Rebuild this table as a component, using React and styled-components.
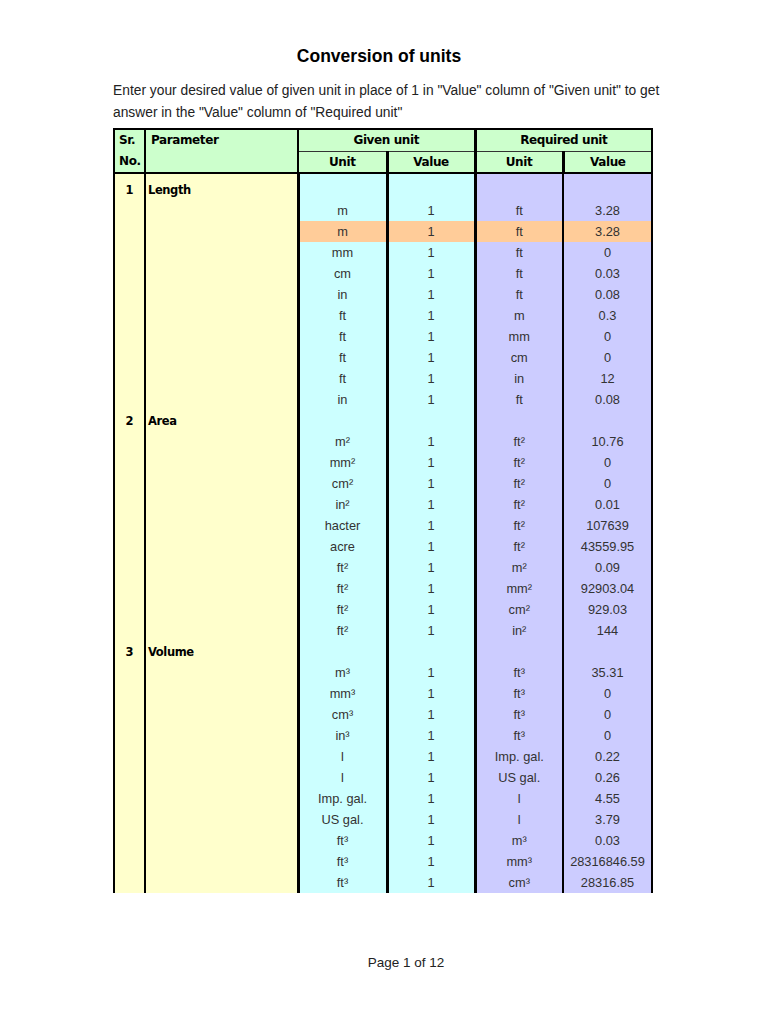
import styled, { createGlobalStyle } from "styled-components";

const GlobalStyle = createGlobalStyle`
  html, body {
    margin: 0;
    padding: 0;
    background: #fff;
  }
  body {
    font-family: "Liberation Sans", Arial, sans-serif;
  }
`;

const sections = [
  {
    no: 1,
    name: "Length",
    rows: [
      ["m", "1", "ft", "3.28"],
      ["m", "1", "ft", "3.28", true],
      ["mm", "1", "ft", "0"],
      ["cm", "1", "ft", "0.03"],
      ["in", "1", "ft", "0.08"],
      ["ft", "1", "m", "0.3"],
      ["ft", "1", "mm", "0"],
      ["ft", "1", "cm", "0"],
      ["ft", "1", "in", "12"],
      ["in", "1", "ft", "0.08"],
    ],
  },
  {
    no: 2,
    name: "Area",
    rows: [
      ["m²", "1", "ft²", "10.76"],
      ["mm²", "1", "ft²", "0"],
      ["cm²", "1", "ft²", "0"],
      ["in²", "1", "ft²", "0.01"],
      ["hacter", "1", "ft²", "107639"],
      ["acre", "1", "ft²", "43559.95"],
      ["ft²", "1", "m²", "0.09"],
      ["ft²", "1", "mm²", "92903.04"],
      ["ft²", "1", "cm²", "929.03"],
      ["ft²", "1", "in²", "144"],
    ],
  },
  {
    no: 3,
    name: "Volume",
    rows: [
      ["m³", "1", "ft³", "35.31"],
      ["mm³", "1", "ft³", "0"],
      ["cm³", "1", "ft³", "0"],
      ["in³", "1", "ft³", "0"],
      ["l", "1", "Imp. gal.", "0.22"],
      ["l", "1", "US gal.", "0.26"],
      ["Imp. gal.", "1", "l", "4.55"],
      ["US gal.", "1", "l", "3.79"],
      ["ft³", "1", "m³", "0.03"],
      ["ft³", "1", "mm³", "28316846.59"],
      ["ft³", "1", "cm³", "28316.85"],
    ],
  },
];

export default function App() {
  return (
    <Page>
      <GlobalStyle />
      <Title>Conversion of units</Title>
      <Intro>
        Enter your desired value of given unit in place of 1 in "Value" column of "Given unit" to get
        answer in the "Value" column of "Required unit"
      </Intro>

      <Sheet>
        <colgroup>
          <col style={{ width: 31 }} />
          <col style={{ width: 153 }} />
          <col style={{ width: 89 }} />
          <col style={{ width: 88 }} />
          <col style={{ width: 88 }} />
          <col style={{ width: 89 }} />
        </colgroup>
        <thead>
          <tr>
            <HeadCell rowSpan={2} $align='left' $pad='4px' $valign='top'>
              Sr.
              <br />
              No.
            </HeadCell>
            <HeadCell rowSpan={2} $align='left' $pad='5px' $valign='top'>
              Parameter
            </HeadCell>
            <HeadCell colSpan={2} $thick>
              Given unit
            </HeadCell>
            <HeadCell colSpan={2}>Required unit</HeadCell>
          </tr>
          <tr>
            <SubHead $thick>Unit</SubHead>
            <SubHead $thick>Value</SubHead>
            <SubHead $thick>Unit</SubHead>
            <SubHead>Value</SubHead>
          </tr>
        </thead>
        <tbody>
          <Spacer>
            <SrCell />
            <ParamCell />
            <GivenCell />
            <GivenCell />
            <RequiredCell />
            <RequiredCell />
          </Spacer>
          {sections.map((s) => [
            <Row key={s.name}>
              <SrCell>{s.no}</SrCell>
              <ParamCell>{s.name}</ParamCell>
              <GivenCell />
              <GivenCell />
              <RequiredCell />
              <RequiredCell />
            </Row>,
            ...s.rows.map((r, i) => (
              <Row key={s.name + i}>
                <SrCell />
                <ParamCell />
                <GivenCell $hot={r[4]}>{r[0]}</GivenCell>
                <GivenCell $hot={r[4]}>{r[1]}</GivenCell>
                <RequiredCell $hot={r[4]}>{r[2]}</RequiredCell>
                <RequiredCell $hot={r[4]}>{r[3]}</RequiredCell>
              </Row>
            )),
          ])}
        </tbody>
      </Sheet>

      <Footer>Page 1 of 12</Footer>
    </Page>
  );
}

const Page = styled.div`
  width: 768px;
  height: 1024px;
  box-sizing: border-box;
  padding: 45px 0 0 113px;
  position: relative;
  overflow: hidden;
`;

const Title = styled.h1`
  margin: 0;
  width: 532px;
  text-align: center;
  font-size: 17.5px;
  line-height: 22px;
  font-weight: bold;
  color: #000;
`;

const Intro = styled.p`
  margin: 13px 0 0;
  width: 570px;
  font-size: 13.8px;
  line-height: 22px;
  color: #222;
`;

const Sheet = styled.table`
  margin-top: 4px;
  width: 538px;
  table-layout: fixed;
  border-collapse: collapse;
  border: 2px solid #000;
  border-bottom: none;
  font-size: 12.8px;

  td,
  th {
    padding: 0;
    overflow: hidden;
    white-space: nowrap;
  }
`;

const HeadCell = styled.th`
  background: #ccffcc;
  border: 2px solid #000;
  border-right-width: ${(p) => (p.$thick ? "3px" : "2px")};
  border-bottom: ${(p) => (p.$valign === "top" ? "2px solid #000" : "1px solid #333")};
  height: 20px;
  text-align: ${(p) => p.$align || "center"};
  vertical-align: ${(p) => p.$valign || "middle"};
  padding-left: ${(p) => p.$pad || "0"} !important;
  font-family: "DejaVu Sans", Verdana, sans-serif;
  font-size: 12px;
  line-height: 21px;
  font-weight: bold;
  color: #000;
  letter-spacing: -0.4px;
`;

const SubHead = styled.th`
  background: #ccffcc;
  border-left: 2px solid #000;
  border-right: ${(p) => (p.$thick ? "3px" : "2px")} solid #000;
  border-bottom: 2px solid #000;
  height: 20px;
  text-align: center;
  font-family: "DejaVu Sans", Verdana, sans-serif;
  font-size: 12px;
  font-weight: bold;
  color: #000;
  letter-spacing: -0.4px;
`;

const Row = styled.tr`
  height: 21px;
`;

const Spacer = styled.tr`
  height: 6px;
`;

const SrCell = styled.td`
  background: #ffffcc;
  border-right: 2px solid #000;
  text-align: center;
  font-family: "DejaVu Sans", Verdana, sans-serif;
  font-size: 11.5px;
  font-weight: bold;
  color: #000;
`;

const ParamCell = styled.td`
  background: #ffffcc;
  border-right: 3px solid #000;
  padding-left: 2px !important;
  font-family: "DejaVu Sans", Verdana, sans-serif;
  font-size: 11.5px;
  font-weight: bold;
  color: #000;
  letter-spacing: -0.4px;
`;

const GivenCell = styled.td`
  background: ${(p) => (p.$hot ? "#ffcc99" : "#ccffff")};
  border-right: 3px solid #000;
  text-align: center;
  color: #333;
`;

const RequiredCell = styled.td`
  background: ${(p) => (p.$hot ? "#ffcc99" : "#ccccff")};
  border-right: 2px solid #000;
  text-align: center;
  color: #333;
`;

const Footer = styled.div`
  position: absolute;
  left: 0;
  right: 0;
  top: 955px;
  padding-left: 44px;
  text-align: center;
  font-size: 13.5px;
  line-height: 16px;
  color: #222;
`;
